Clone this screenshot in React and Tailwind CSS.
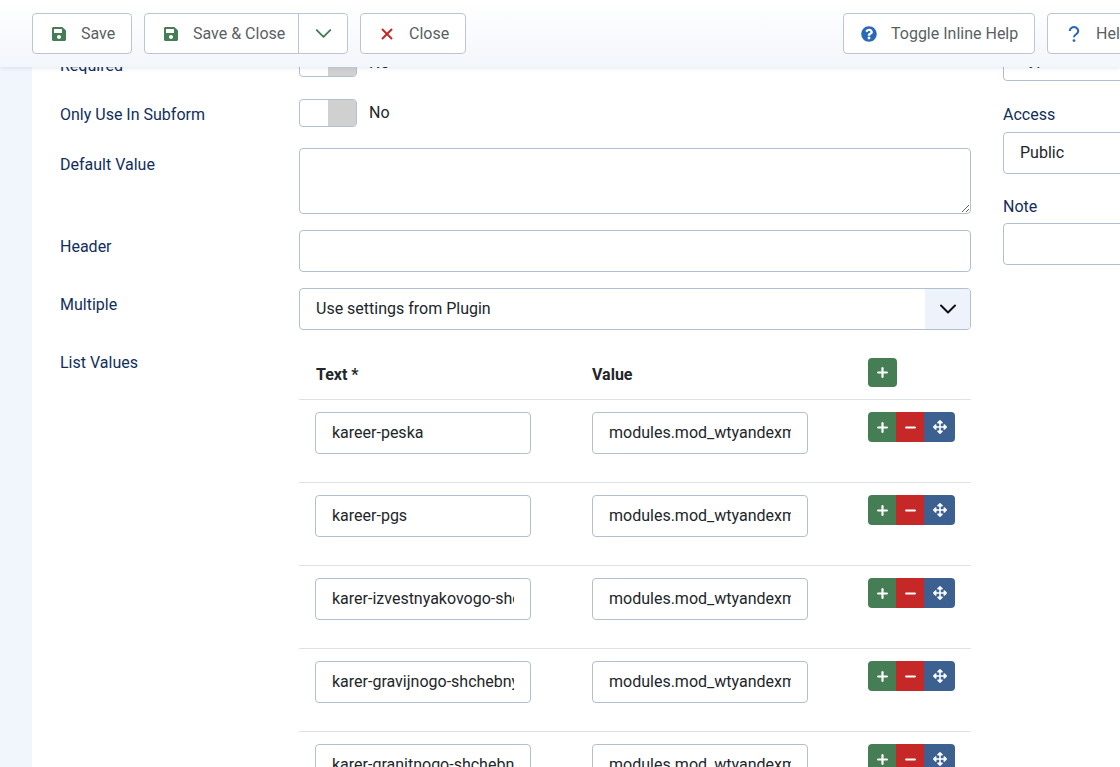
import { ChevronDown, Plus, Minus, X } from "lucide-react";
import { FaSave, FaQuestionCircle, FaArrowsAlt } from "react-icons/fa";

const rows = [
  "kareer-peska",
  "kareer-pgs",
  "karer-izvestnyakovogo-shchebnya",
  "karer-gravijnogo-shchebnya",
  "karer-granitnogo-shchebnya",
];

const inputClass =
  "block h-[42px] rounded-[4px] border border-[#b2bfcd] bg-white px-4 text-base text-[#22262a] outline-none";

function ToolButton({ icon, label, className = "" }) {
  return (
    <button className={"flex h-[41px] shrink-0 items-center rounded-[4px] border border-[#bcc6d3] bg-white text-base text-[#5a5f64] " + className}>
      <span className="flex w-[22px] justify-center">{icon}</span>
      <span className="ml-[11px]">{label}</span>
    </button>
  );
}

function Toggle() {
  return (
    <div className="flex h-[28px] w-[58px] overflow-hidden rounded-[4px] border border-[#b2bfcd] bg-white">
      <div className="w-[28px]" />
      <div className="flex-1 bg-[#d0d0d0]" />
    </div>
  );
}

function FieldLabel({ children, className = "" }) {
  return <div className={"w-[239px] shrink-0 text-base leading-6 text-[#112e5c] " + className}>{children}</div>;
}

function RowButtons() {
  return (
    <div className="flex h-[30px] w-[87px] overflow-hidden rounded-[4px] text-white">
      <div className="flex w-[28px] items-center justify-center bg-[#457d54]"><Plus size={15} strokeWidth={3.5} /></div>
      <div className="flex w-[28px] items-center justify-center bg-[#c52827]"><Minus size={15} strokeWidth={3.5} /></div>
      <div className="flex flex-1 items-center justify-center bg-[#3c6190]"><FaArrowsAlt size={14} /></div>
    </div>
  );
}

export default function App() {
  return (
    <div className="flex h-[767px] w-[1120px] flex-col overflow-hidden bg-[#f1f5fc] font-['Roboto',sans-serif]">
      {/* toolbar */}
      <div className="relative z-10 flex h-[67px] shrink-0 gap-3 bg-gradient-to-b from-white to-[#f3f6fb] pl-8 pt-[13px] shadow-[0_1px_4px_rgba(30,60,110,0.12)]">
        <ToolButton className="w-[100px] pl-[15px]" icon={<FaSave size={16} className="text-[#457d54]" />} label="Save" />
        <div className="flex h-[41px] w-[204px] shrink-0 rounded-[4px] border border-[#bcc6d3] bg-white text-base text-[#5a5f64]">
          <div className="flex w-[154px] items-center border-r border-[#bcc6d3] pl-[15px]">
            <span className="flex w-[22px] justify-center"><FaSave size={16} className="text-[#457d54]" /></span>
            <span className="ml-[11px]">Save &amp; Close</span>
          </div>
          <div className="flex flex-1 items-center justify-center">
            <ChevronDown size={27} strokeWidth={1.7} className="text-[#457d54]" />
          </div>
        </div>
        <ToolButton className="w-[106px] pl-[15px]" icon={<X size={18} strokeWidth={2.6} className="text-[#c52827]" />} label="Close" />
        <ToolButton className="ml-[365px] w-[192px] pl-[14px]" icon={<FaQuestionCircle size={16} className="text-[#2a69b8]" />} label="Toggle Inline Help" />
        <ToolButton
          className="w-[100px] pl-[15px]"
          icon={
            <svg width="12" height="16" viewBox="0 0 12 16" fill="none" className="text-[#2a69b8]">
              <path d="M1.8 4.9a4.2 3.8 0 1 1 6.6 3.1c-1.5 1-2.4 1.6-2.4 3.3" stroke="currentColor" strokeWidth="2.1" />
              <circle cx="6" cy="14.6" r="1.4" fill="currentColor" />
            </svg>
          }
          label="Help"
        />
      </div>

      {/* form card, scrolled so the first row sits under the toolbar */}
      <div className="ml-8 -mt-[18px] flex flex-1 bg-white pl-7">
        <div className="shrink-0" style={{ flexBasis: 911 }}>
          <div className="flex h-[50px] items-start">
            <FieldLabel className="pt-[5px]">Required</FieldLabel>
            <Toggle />
            <span className="ml-3 pt-[2px] text-base leading-6 text-[#22262a]">No</span>
          </div>
          <div className="flex h-[49px] items-start">
            <FieldLabel className="pt-[4px]">Only Use In Subform</FieldLabel>
            <Toggle />
            <span className="ml-3 pt-[2px] text-base leading-6 text-[#22262a]">No</span>
          </div>
          <div className="mb-4 flex items-start">
            <FieldLabel className="pt-[5px]">Default Value</FieldLabel>
            <textarea readOnly className="block h-[66px] w-[672px] rounded-[4px] border border-[#b2bfcd] bg-white px-4 py-2 text-base outline-none" />
          </div>
          <div className="mb-4 flex items-start">
            <FieldLabel className="pt-[5px]">Header</FieldLabel>
            <input readOnly className={inputClass + " w-[672px]"} />
          </div>
          <div className="mb-7 flex items-start">
            <FieldLabel className="pt-[5px]">Multiple</FieldLabel>
            <div className="flex h-[42px] w-[672px] items-center justify-between overflow-hidden rounded-[4px] border border-[#b2bfcd] bg-white pl-4 text-base text-[#22262a]">
              <span>Use settings from Plugin</span>
              <span className="flex h-full w-[45px] items-center justify-center bg-[#eef2fb]">
                <ChevronDown size={28} strokeWidth={1.7} className="text-[#111]" />
              </span>
            </div>
          </div>
          <div className="flex items-start">
            <FieldLabel className="-mt-[7px]">List Values</FieldLabel>
            <div className="w-[672px]">
              <div className="flex h-[42px] border-b border-[#dee2e6] text-base font-bold text-[#22262a]">
                <div className="w-[293px] pl-[17px] pt-[5px]">Text *</div>
                <div className="w-[276px] pt-[5px]">Value</div>
                <div className="flex h-[29px] w-[29px] items-center justify-center rounded-[4px] bg-[#457d54] text-white">
                  <Plus size={15} strokeWidth={3.5} />
                </div>
              </div>
              {rows.map((text) => (
                <div key={text} className="flex h-[83px] border-b border-[#dee2e6] pt-[12px]">
                  <input readOnly value={text} className={inputClass + " ml-4 w-[216px] pb-[2px]"} />
                  <input readOnly value="modules.mod_wtyandexmap.fields" className={inputClass + " ml-[61px] w-[216px] pb-[2px]"} />
                  <div className="ml-[60px]"><RowButtons /></div>
                </div>
              ))}
            </div>
          </div>
        </div>

        {/* right column */}
        <div className="ml-8 w-[300px] shrink-0 -mt-[10px]">
          <div className={inputClass + " flex items-center"}>Type</div>
          <div className="mb-[5px] mt-[22px] text-base leading-6 text-[#112e5c]">Access</div>
          <div className={inputClass + " flex items-center"}>Public</div>
          <div className="mb-[4px] mt-[21px] text-base leading-6 text-[#112e5c]">Note</div>
          <input readOnly className={inputClass + " w-full"} />
        </div>
      </div>
    </div>
  );
}
